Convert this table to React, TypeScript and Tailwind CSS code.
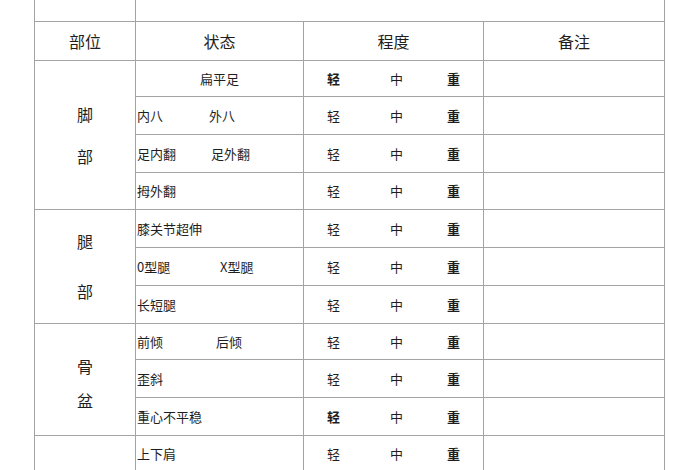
import React from "react";

const line = "border border-[#a3a3a3]";

type Row = {
  h: number;
  status: React.ReactNode;
  boldLight?: boolean;
};

function Degree({ boldLight }: { boldLight?: boolean }) {
  return (
    <div className="flex items-center text-[13px] leading-none">
      <span className={`ml-[23px] ${boldLight ? "font-bold" : ""}`}>轻</span>
      <span className="ml-[50px]">中</span>
      <span className="ml-[44px] font-bold">重</span>
    </div>
  );
}

function Two({ a, b, w }: { a: string; b: string; w: number }) {
  return (
    <div className="flex items-center pl-[1px]">
      <span style={{ width: w }} className="inline-block">
        {a}
      </span>
      <span>{b}</span>
    </div>
  );
}

export default function App() {
  const groups: { label: string[]; gap: number; offset: number; rows: Row[] }[] = [
    {
      label: ["脚", "部"],
      gap: 42,
      offset: 1,
      rows: [
        { h: 36, status: <div className="text-center">扁平足</div>, boldLight: true },
        { h: 38, status: <Two a="内八" b="外八" w={72} /> },
        { h: 38, status: <Two a="足内翻" b="足外翻" w={74} /> },
        { h: 37, status: <div className="pl-[1px]">拇外翻</div> },
      ],
    },
    {
      label: ["腿", "部"],
      gap: 50,
      offset: 0,
      rows: [
        { h: 38, status: <div className="pl-[1px]">膝关节超伸</div> },
        { h: 38, status: <Two a="0型腿" b="X型腿" w={83} /> },
        { h: 38, status: <div className="pl-[1px]">长短腿</div> },
      ],
    },
    {
      label: ["骨", "盆"],
      gap: 34,
      offset: 8,
      rows: [
        { h: 36, status: <Two a="前倾" b="后倾" w={79} /> },
        { h: 38, status: <div className="pl-[1px]">歪斜</div> },
        { h: 38, status: <div className="pl-[1px]">重心不平稳</div>, boldLight: true },
      ],
    },
    {
      label: [],
      gap: 0,
      offset: 0,
      rows: [{ h: 37, status: <div className="pl-[1px]">上下肩</div> }],
    },
  ];

  return (
    <div
      className="w-[700px] h-[470px] overflow-hidden bg-white text-[#1e1e1e]"
      style={{ fontFamily: '"Noto Sans CJK SC", "Noto Sans", sans-serif' }}
    >
      <div className="pl-[34px]">
        <table className="table-fixed border-collapse w-[630px]">
          <colgroup>
            <col className="w-[101px]" />
            <col className="w-[168px]" />
            <col className="w-[180px]" />
            <col className="w-[181px]" />
          </colgroup>
          <tbody>
            <tr className="h-[21px]">
              <td className={`${line} border-t-0`} />
              <td className={`${line} border-t-0`} colSpan={3} />
            </tr>
            <tr className="h-[39px] text-[16px]">
              <td className={`${line} text-center`}>部位</td>
              <td className={`${line} text-center`}>状态</td>
              <td className={`${line} text-center`}>程度</td>
              <td className={`${line} text-center`}>备注</td>
            </tr>
            {groups.map((g, gi) =>
              g.rows.map((r, ri) => (
                <tr key={`${gi}-${ri}`} style={{ height: r.h }} className="text-[13px]">
                  {ri === 0 && (
                    <td className={`${line} align-middle p-0`} rowSpan={g.rows.length}>
                      <div
                        className="flex flex-col items-center text-[16px] leading-none"
                        style={{ gap: g.gap - 16, paddingTop: g.offset }}
                      >
                        {g.label.map((c, i) => (
                          <span key={i}>{c}</span>
                        ))}
                      </div>
                    </td>
                  )}
                  <td className={`${line} p-0 leading-none`}>{r.status}</td>
                  <td className={`${line} p-0`}>
                    <Degree boldLight={r.boldLight} />
                  </td>
                  <td className={`${line} p-0`} />
                </tr>
              ))
            )}
          </tbody>
        </table>
      </div>
    </div>
  );
}
